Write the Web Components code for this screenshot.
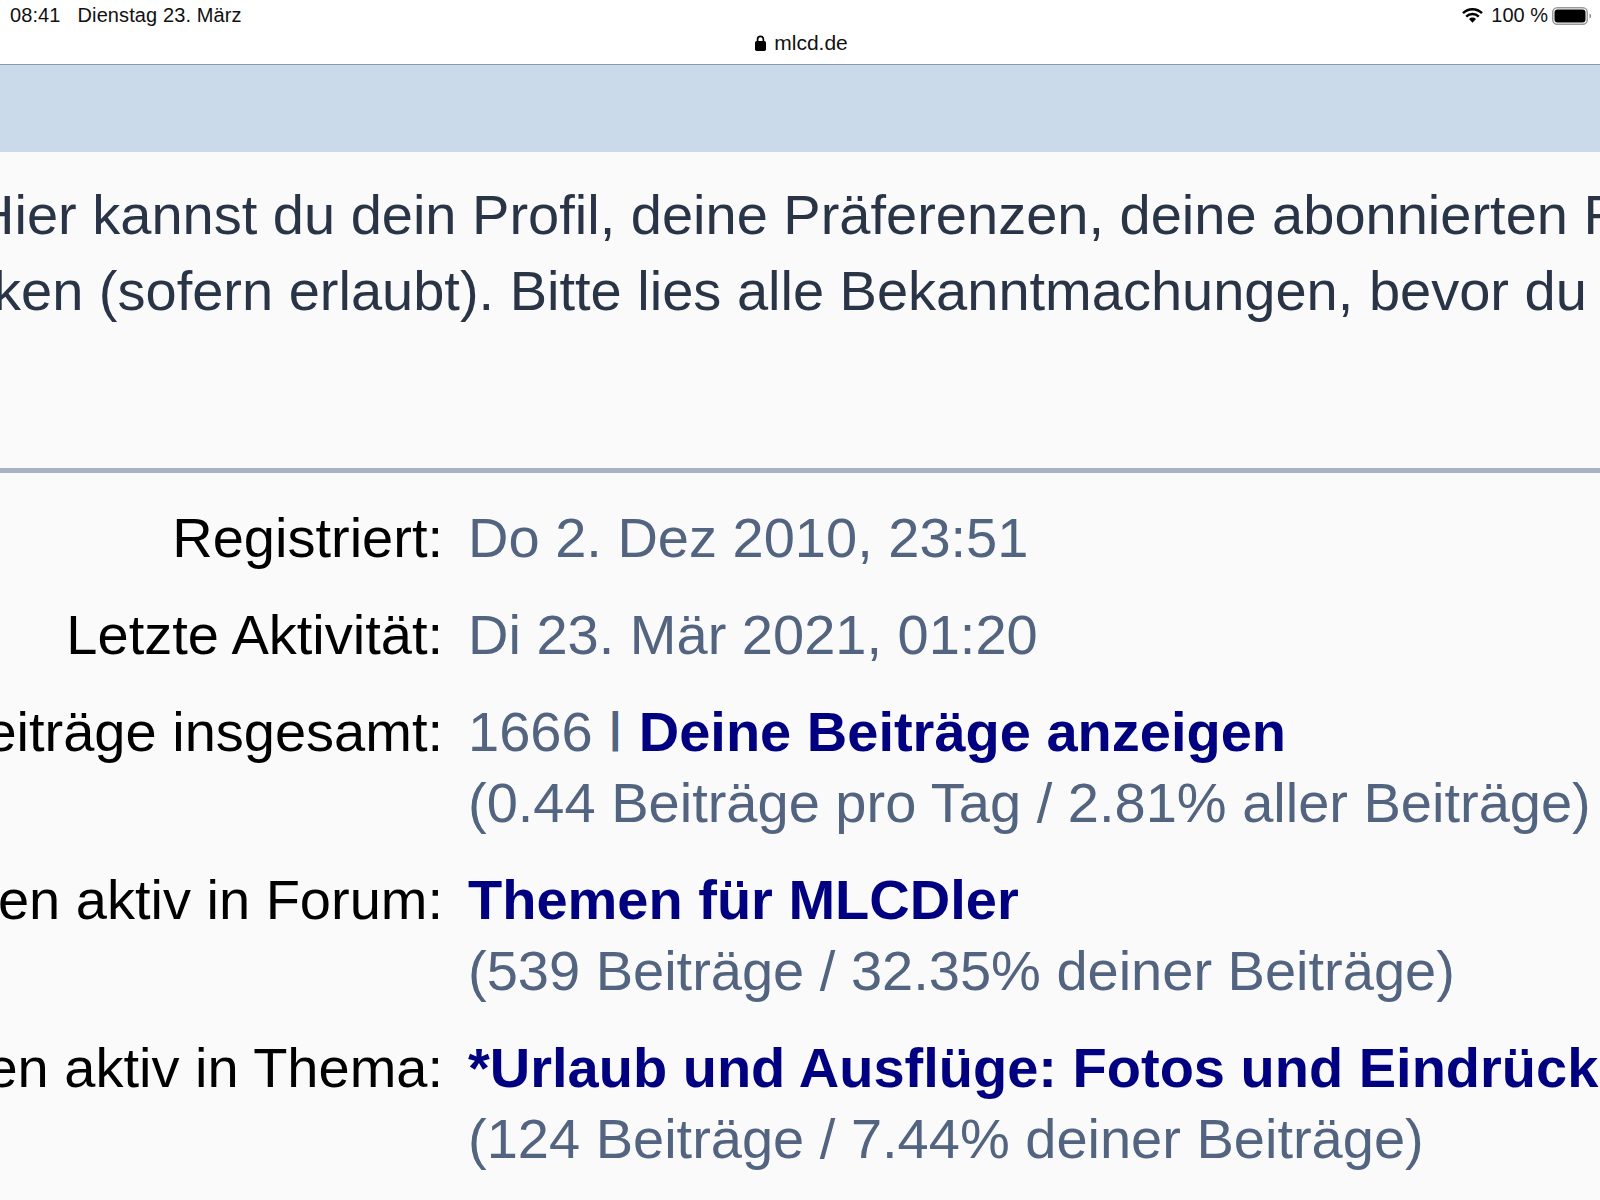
<!DOCTYPE html>
<html lang="de">
<head>
<meta charset="utf-8">
<title>mlcd.de</title>
<style>
    html, body { margin: 0; height: 1200px; overflow: hidden; background: #fafafa; }
    body { font-family: "Liberation Sans", Arial, sans-serif; }
</style>
</head>
<body>
<safari-bar time="08:41" date="Dienstag 23. März" host="mlcd.de" battery="100 %"></safari-bar>
<blue-band></blue-band>
<intro-text>
    <span slot="one">Hier kannst du dein Profil, deine Präferenzen, deine abonnierten F</span>
    <span slot="two">ken (sofern erlaubt). Bitte lies alle Bekanntmachungen, bevor du</span>
</intro-text>
<stat-list>
    <stat-row label="Registriert:">Do 2. Dez 2010, 23:51</stat-row>
    <stat-row label="Letzte Aktivität:">Di 23. Mär 2021, 01:20</stat-row>
    <stat-row label="Beiträge insgesamt:" note="(0.44 Beiträge pro Tag / 2.81% aller Beiträge)">1666 <i>|</i> <b>Deine Beiträge anzeigen</b></stat-row>
    <stat-row label="Am meisten aktiv in Forum:" note="(539 Beiträge / 32.35% deiner Beiträge)"><b>Themen für MLCDler</b></stat-row>
    <stat-row label="Am meisten aktiv in Thema:" note="(124 Beiträge / 7.44% deiner Beiträge)"><b>*Urlaub und Ausflüge: Fotos und Eindrücke</b></stat-row>
</stat-list>
<script>
class SafariBar extends HTMLElement {
    constructor() {
        super();
        this.attachShadow({ mode: 'open' });
    }

    connectedCallback() {
        const a = (n) => this.getAttribute(n);
        this.shadowRoot.innerHTML = `
            <style>
                :host {
                    display: block;
                    height: 65px;
                    box-sizing: border-box;
                    background: #fff;
                    border-bottom: 1px solid #8e99a6;
                    color: #111;
                    font-size: 20px;
                    white-space: nowrap;
                }
                .status {
                    display: flex;
                    justify-content: space-between;
                    align-items: center;
                    height: 31px;
                    padding: 0 8px 0 10px;
                }
                .left, .right { display: flex; align-items: center; }
                .left { letter-spacing: .1px; }
                .left span + span { margin-left: 17px; }
                .right .pct { margin: 0 4px 0 8px; }
                .url {
                    display: flex;
                    justify-content: center;
                    align-items: center;
                    gap: 8px;
                    height: 24px;
                    padding-left: 3px;
                    font-size: 21px;
                }
                svg { display: block; }
            </style>
            <div class="status">
                <div class="left"><span>${a('time')}</span><span>${a('date')}</span></div>
                <div class="right">
                    <svg width="21" height="15" viewBox="0 0 21 15"><path fill="none" stroke="#000" stroke-width="2.4" d="M1 5.2a13.5 13.5 0 0 1 19 0M4.2 8.6a9 9 0 0 1 12.6 0"/><path d="M7 11a5 5 0 0 1 7 0l-3.5 3.8z"/></svg>
                    <span class="pct">${a('battery')}</span>
                    <svg width="40" height="18" viewBox="0 0 40 18"><rect x=".75" y=".75" width="34.500" height="16.500" rx="4.500" fill="none" stroke="#9a9a9a" stroke-width="1.500"/><rect x="2.500" y="2.500" width="31" height="13" rx="3" fill="#000"/><path d="M37.500 6.500c1.200.4 1.600 1.400 1.600 2.500s-.4 2.100-1.600 2.500z" fill="#8a8a8a"/></svg>
                </div>
            </div>
            <div class="url">
                <svg width="11" height="16" viewBox="0 0 11 16"><path fill="none" stroke="#000" stroke-width="1.700" d="M2.600 7V4.300a2.900 2.900 0 0 1 5.800 0V7"/><rect y="6" width="11" height="10" rx="1.800"/></svg>
                <span>${a('host')}</span>
            </div>
        `;
    }
}

class BlueBand extends HTMLElement {
    constructor() {
        super();
        this.attachShadow({ mode: 'open' }).innerHTML = `
            <style>
                :host { display: block; height: 87px; background: #cadaeb; }
            </style>
        `;
    }
}

class IntroText extends HTMLElement {
    constructor() {
        super();
        this.attachShadow({ mode: 'open' }).innerHTML = `
            <style>
                :host {
                    display: block;
                    box-sizing: border-box;
                    height: 321px;
                    padding-top: 25px;
                    border-bottom: 5px solid #a5b3c3;
                    color: #293547;
                    font-size: 56px;
                    line-height: 76px;
                    white-space: nowrap;
                    overflow: hidden;
                }
                div { margin-left: -26px; }
                div + div { margin-left: -7px; }
            </style>
            <div><slot name="one"></slot></div>
            <div><slot name="two"></slot></div>
        `;
    }
}

class StatList extends HTMLElement {
    constructor() {
        super();
        this.attachShadow({ mode: 'open' }).innerHTML = `
            <style>
                :host {
                    display: flex;
                    flex-direction: column;
                    padding-top: 29px;
                    gap: 26px;
                    overflow: hidden;
                }
            </style>
            <slot></slot>
        `;
    }
}

class StatRow extends HTMLElement {
    constructor() {
        super();
        this.attachShadow({ mode: 'open' });
    }

    connectedCallback() {
        const note = this.getAttribute('note');
        this.shadowRoot.innerHTML = `
            <style>
                :host {
                    display: grid;
                    grid-template-columns: 443px 1fr;
                    column-gap: 25px;
                    font-size: 56px;
                    line-height: 71px;
                    white-space: nowrap;
                }
                .label { display: flex; justify-content: flex-end; color: #000; }
                .value { color: #536480; }
                ::slotted(b) { color: #000080; }
                /* the reference bar only runs from baseline to cap height */
                ::slotted(i) {
                    font-style: normal;
                    font-weight: bold;
                    font-size: 43px;
                    line-height: 0;
                    vertical-align: 9px;
                    margin: 0 2px 0 1px;
                }
            </style>
            <div class="label"><span>${this.getAttribute('label')}</span></div>
            <div class="value">
                <div><slot></slot></div>
                ${note ? `<div>${note}</div>` : ''}
            </div>
        `;
    }
}

customElements.define('safari-bar', SafariBar);
customElements.define('blue-band', BlueBand);
customElements.define('intro-text', IntroText);
customElements.define('stat-list', StatList);
customElements.define('stat-row', StatRow);
</script>
</body>
</html>
